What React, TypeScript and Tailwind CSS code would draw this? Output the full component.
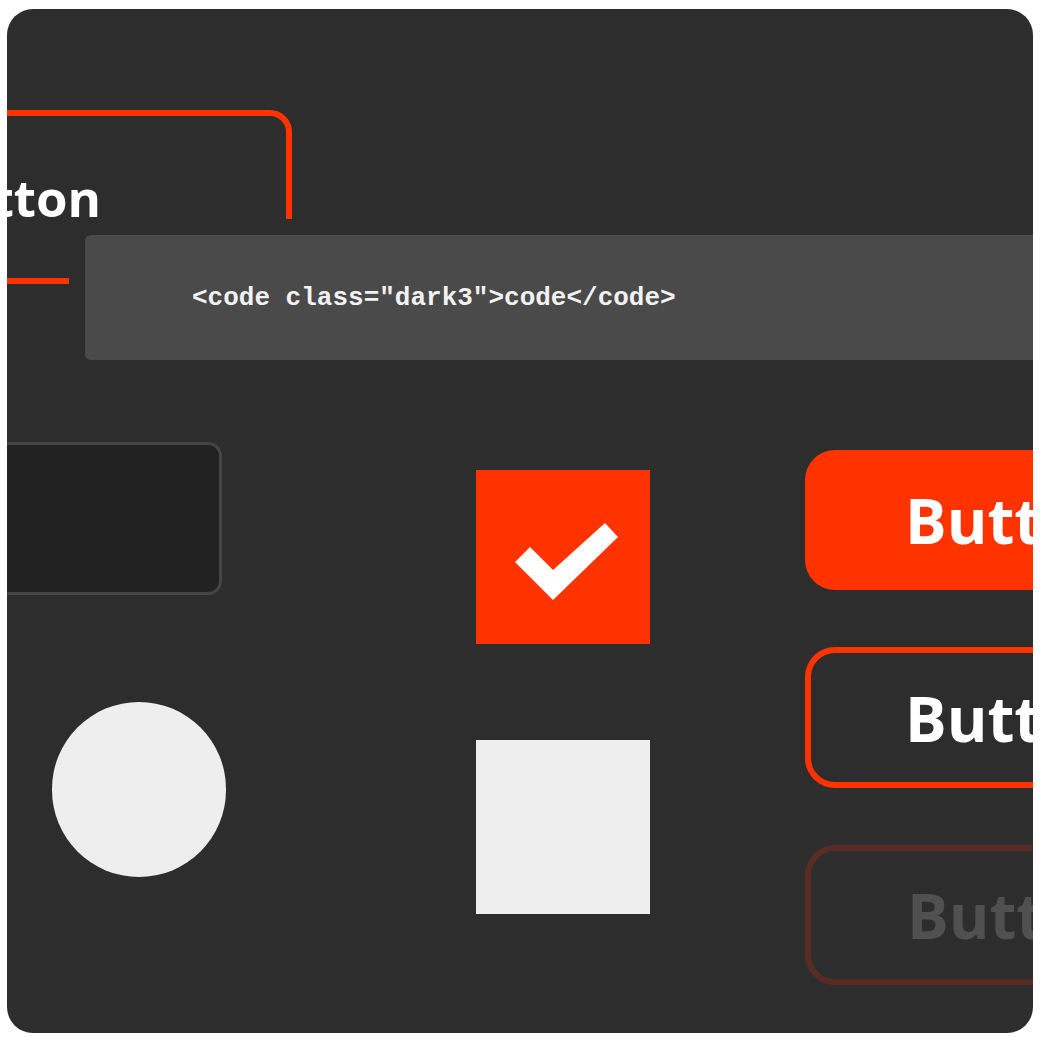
import React from "react";

export default function App() {
  const sans = { fontFamily: '"Open Sans", "Noto Sans", sans-serif' };
  return (
    <div className="min-h-screen w-full bg-white pt-[9px] pl-[7px]">
      <div className="w-[1026px] h-[1024px] rounded-[26px] bg-[#2d2d2d] overflow-hidden">
        {/* top: outlined button + code block */}
        <div className="pt-[101px]">
          <div
            className="ml-[-115px] w-[400px] h-[174px] rounded-[22px] border-[6px] border-[#ff3300] flex items-center justify-end pr-[185px]"
            style={sans}
          >
            <span className="text-white font-bold text-[51px] leading-none">Button</span>
          </div>
          <div className="mt-[-49px] ml-[78px] w-[1000px] h-[125px] rounded-[6px] bg-[#4a4a4a] shadow-[0_0_0_16px_#2d2d2d] flex items-center pl-[107px]">
            <code
              className="text-[#f2f2f2] text-[26px] font-bold leading-none whitespace-pre"
              style={{ fontFamily: '"Liberation Mono", "Courier New", monospace' }}
            >
              {'<code class="dark3">code</code>'}
            </code>
          </div>
        </div>

        {/* bottom: components */}
        <div className="mt-[82px] flex items-start">
          {/* left column */}
          <div className="ml-[-85px] w-[300px] flex flex-col">
            <div className="w-[300px] h-[153px] rounded-[14px] border-[3px] border-[#454545] bg-[#222222]" />
            <div className="mt-[107px] ml-[130px] w-[174px] h-[175px] rounded-full bg-[#eeeeee]" />
          </div>

          {/* middle column */}
          <div className="ml-[254px] mt-[28px] w-[174px] flex flex-col">
            <div className="w-[174px] h-[174px] bg-[#ff3300]">
              <svg width="174" height="174" viewBox="0 0 174 174">
                <polygon points="39,92 54,77 77,100 129,53 142,67 77,130" fill="#ffffff" />
              </svg>
            </div>
            <div className="mt-[96px] w-[174px] h-[174px] bg-[#eeeeee]" />
          </div>

          {/* right column */}
          <div className="ml-[155px] mt-[8px] flex flex-col gap-[57px]" style={sans}>
            <div className="w-[400px] h-[140px] rounded-[30px] bg-[#ff3300] flex items-center pl-[100px]">
              <span className="text-white font-bold text-[62px] leading-none">Button</span>
            </div>
            <div className="w-[400px] h-[141px] rounded-[30px] border-[6px] border-[#ff3300] flex items-center pl-[94px]">
              <span className="text-white font-bold text-[62px] leading-none">Button</span>
            </div>
            <div className="w-[400px] h-[140px] rounded-[30px] border-[6px] border-[#582c23] flex items-center pl-[96px]">
              <span className="text-[#505050] font-bold text-[62px] leading-none">Button</span>
            </div>
          </div>
        </div>
      </div>
    </div>
  );
}
